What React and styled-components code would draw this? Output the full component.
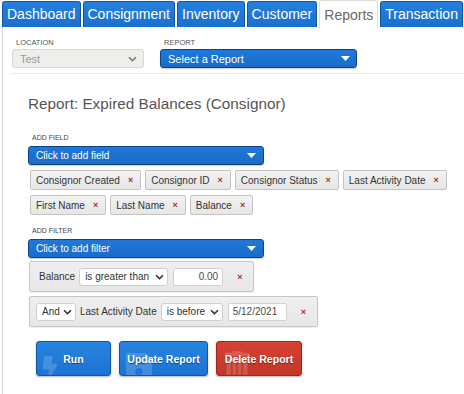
import React from "react";
import styled, { createGlobalStyle, css } from "styled-components";
import { FaBolt, FaSave, FaTrashAlt } from "react-icons/fa";

const tabs = ["Dashboard", "Consignment", "Inventory", "Customer", "Reports", "Transaction"];
const fields = [
  ["Consignor Created", "Consignor ID", "Consignor Status", "Last Activity Date"],
  ["First Name", "Last Name", "Balance"],
];

const Chevron = () => (
  <svg width="9" height="6" viewBox="0 0 9 6">
    <path d="M1 1.2 L4.5 4.6 L8 1.2" fill="none" stroke="currentColor" strokeWidth="1.6" />
  </svg>
);

const Caret = () => (
  <svg width="9" height="5" viewBox="0 0 9 5">
    <path d="M0 0 H9 L4.5 5 Z" fill="#fff" />
  </svg>
);

const App = () => {
  return (
    <>
      <GlobalStyle />
      <TabBar>
        {tabs.map((t) => (
          <Tab key={t} $active={t === "Reports"}>
            {t}
          </Tab>
        ))}
      </TabBar>
      <Panel>
        <TopRow>
          <Field>
            <FieldLabel>LOCATION</FieldLabel>
            <TopSelect $width={132} $disabled>
              <span>Test</span>
              <Chevron />
            </TopSelect>
          </Field>
          <Field>
            <FieldLabel>REPORT</FieldLabel>
            <TopSelect $width={197}>
              <span>Select a Report</span>
              <Caret />
            </TopSelect>
          </Field>
        </TopRow>
        <Divider />
        <ReportSection>
          <Heading>Report: Expired Balances (Consignor)</Heading>
          <SmallLabel>ADD FIELD</SmallLabel>
          <BlueSelect>
            <span>Click to add field</span>
            <Caret />
          </BlueSelect>
          <ChipList>
            {fields.map((row, i) => (
              <ChipRow key={i}>
                {row.map((f) => (
                  <Chip key={f}>
                    {f}
                    <Remove>×</Remove>
                  </Chip>
                ))}
              </ChipRow>
            ))}
          </ChipList>
          <SmallLabel $gap={11}>ADD FILTER</SmallLabel>
          <BlueSelect>
            <span>Click to add filter</span>
            <Caret />
          </BlueSelect>
          <FilterBox $first>
            <FilterText>Balance</FilterText>
            <MiniSelect $width={89}>
              <span>is greater than</span>
              <Chevron />
            </MiniSelect>
            <MiniInput $width={50} $right>
              0.00
            </MiniInput>
            <FilterRemove>×</FilterRemove>
          </FilterBox>
          <FilterBox>
            <MiniSelect $width={40}>
              <span>And</span>
              <Chevron />
            </MiniSelect>
            <FilterText>Last Activity Date</FilterText>
            <MiniSelect $width={62}>
              <span>is before</span>
              <Chevron />
            </MiniSelect>
            <MiniInput $width={59}>5/12/2021</MiniInput>
            <FilterRemove>×</FilterRemove>
          </FilterBox>
          <ButtonRow>
            <ActionButton $width={75}>
              <ButtonIcon $left={1} $top={14}>
                <FaBolt size={24} />
              </ButtonIcon>
              Run
            </ActionButton>
            <ActionButton $width={89}>
              <ButtonIcon $left={4} $top={9}>
                <FaSave size={30} />
              </ButtonIcon>
              Update Report
            </ActionButton>
            <ActionButton $width={86} $danger>
              <ButtonIcon $left={6} $top={9}>
                <FaTrashAlt size={28} />
              </ButtonIcon>
              Delete Report
            </ActionButton>
          </ButtonRow>
        </ReportSection>
      </Panel>
    </>
  );
};

const GlobalStyle = createGlobalStyle`
  html, body {
    margin: 0;
    padding: 0;
    background: #fff;
    font-family: "Liberation Sans", Arial, sans-serif;
  }
  * {
    box-sizing: border-box;
  }
`;

const TabBar = styled.div`
  display: flex;
  align-items: flex-end;
  gap: 2px;
  height: 28px;
  padding-left: 2px;
  overflow: hidden;
  white-space: nowrap;
`;

const Tab = styled.div`
  flex: none;
  height: 26px;
  margin-bottom: 1px;
  padding: 0 4px;
  border: 1px solid #0f56a3;
  border-bottom: none;
  border-radius: 3px 3px 0 0;
  background: linear-gradient(#2580dd, #1a70cf);
  color: #fff;
  font-size: 14px;
  line-height: 24px;

  ${(p) =>
    p.$active &&
    css`
      height: 28px;
      margin-bottom: 0;
      border-color: #dcdcdc;
      background: #fff;
      color: #6a6a6a;
      line-height: 28px;
    `}
`;

const Panel = styled.div`
  margin-left: 2px;
  margin-top: -1px;
  min-height: calc(100vh - 27px);
  border-left: 1px solid #d2d2d2;
`;

const TopRow = styled.div`
  display: flex;
  gap: 16px;
  padding: 11px 0 0 9px;
`;

const Field = styled.div`
  display: flex;
  flex-direction: column;
  gap: 2px;
`;

const FieldLabel = styled.div`
  padding-left: 4px;
  font-size: 7.5px;
  line-height: 9px;
  color: #555;
`;

const TopSelect = styled.div`
  display: flex;
  align-items: center;
  justify-content: space-between;
  width: ${(p) => p.$width}px;
  height: 19px;
  padding: 0 6px 0 7px;
  border-radius: 3px;
  font-size: 11px;
  ${(p) =>
    p.$disabled
      ? css`
          background: #eeeeea;
          border: 1px solid #d8d8d4;
          color: #9a9a9a;
          svg {
            color: #777;
          }
        `
      : css`
          background: linear-gradient(#1f78d8, #1a6cc9);
          border: 1px solid #0d4488;
          color: #fff;
          box-shadow: 0 1px 1px rgba(0, 0, 0, 0.2);
        `}
`;

const Divider = styled.div`
  height: 1px;
  margin: 5px 0 0 7px;
  background: #ececec;
`;

const ReportSection = styled.div`
  padding-left: 25px;
`;

const Heading = styled.h2`
  margin: 21px 0 0 0;
  font-size: 15.3px;
  font-weight: normal;
  line-height: 17px;
  color: #555;
`;

const SmallLabel = styled.div`
  margin-top: ${(p) => p.$gap ?? 21}px;
  padding-left: 4px;
  font-size: 7px;
  line-height: 9px;
  color: #444;
`;

const BlueSelect = styled.div`
  display: flex;
  align-items: center;
  justify-content: space-between;
  width: 236px;
  height: 19px;
  margin-top: 4px;
  padding: 0 7px 0 7px;
  border: 1px solid #0d4488;
  border-radius: 3px;
  background: linear-gradient(#1f78d8, #1a6cc9);
  color: #fff;
  font-size: 10px;
  box-shadow: 0 1px 1px rgba(0, 0, 0, 0.2);
`;

const ChipList = styled.div`
  display: flex;
  flex-direction: column;
  gap: 5px;
  margin-top: 5px;
  padding-left: 2px;
`;

const ChipRow = styled.div`
  display: flex;
  gap: 4px;
`;

const Chip = styled.div`
  display: flex;
  align-items: center;
  height: 20px;
  padding: 0 7px 0 5px;
  border: 1px solid #c4c4c4;
  border-radius: 2px;
  background: linear-gradient(#f2f2f2, #e6e6e6);
  color: #333;
  font-size: 10px;
  white-space: nowrap;
`;

const Remove = styled.span`
  margin-left: 8px;
  color: #a8322d;
  font-size: 9px;
  font-weight: bold;
`;

const FilterBox = styled.div`
  display: flex;
  align-items: center;
  gap: 4px;
  width: fit-content;
  height: 31px;
  margin: ${(p) => (p.$first ? "3px 0 0 1px" : "4px 0 0 1px")};
  padding: 0 11px 0 ${(p) => (p.$first ? 9 : 6)}px;
  border: 1px solid #c6c6c6;
  border-radius: 2px;
  background: linear-gradient(#efefef, #e7e7e7);
  box-shadow: 0 1px 1px rgba(0, 0, 0, 0.08);
`;

const FilterText = styled.span`
  color: #333;
  font-size: 10px;
  white-space: nowrap;
`;

const MiniSelect = styled.div`
  display: flex;
  align-items: center;
  justify-content: space-between;
  width: ${(p) => p.$width}px;
  height: 18px;
  padding: 0 3px 0 5px;
  border: 1px solid #cfcfcf;
  border-radius: 3px;
  background: #fff;
  color: #333;
  font-size: 10px;
  white-space: nowrap;
`;

const MiniInput = styled.div`
  display: flex;
  align-items: center;
  justify-content: ${(p) => (p.$right ? "flex-end" : "flex-start")};
  width: ${(p) => p.$width}px;
  height: 18px;
  margin-left: 1px;
  padding: 0 4px;
  border: 1px solid #d2d2d2;
  border-radius: 2px;
  background: #fff;
  color: #4a4a4a;
  font-size: 10px;
`;

const FilterRemove = styled.span`
  margin-left: 10px;
  color: #a8322d;
  font-size: 9px;
  font-weight: bold;
`;

const ButtonRow = styled.div`
  display: flex;
  gap: 8px;
  margin: 14px 0 0 8px;
`;

const ActionButton = styled.div`
  position: relative;
  display: flex;
  align-items: center;
  justify-content: center;
  width: ${(p) => p.$width}px;
  height: 35px;
  overflow: hidden;
  border: 1px solid ${(p) => (p.$danger ? "#962a20" : "#14579f")};
  border-radius: 3px;
  background: ${(p) =>
    p.$danger
      ? "linear-gradient(#d54232, #c33629)"
      : "linear-gradient(#2784e0, #1d73d2)"};
  color: #fff;
  font-size: 10.5px;
  font-weight: bold;
  text-shadow: 0 1px 1px rgba(0, 0, 0, 0.45);
  box-shadow: 0 1px 2px rgba(0, 0, 0, 0.3);
`;

const ButtonIcon = styled.span`
  position: absolute;
  left: ${(p) => p.$left}px;
  top: ${(p) => p.$top}px;
  display: flex;
  color: rgba(255, 255, 255, 0.17);
`;

export default App;
